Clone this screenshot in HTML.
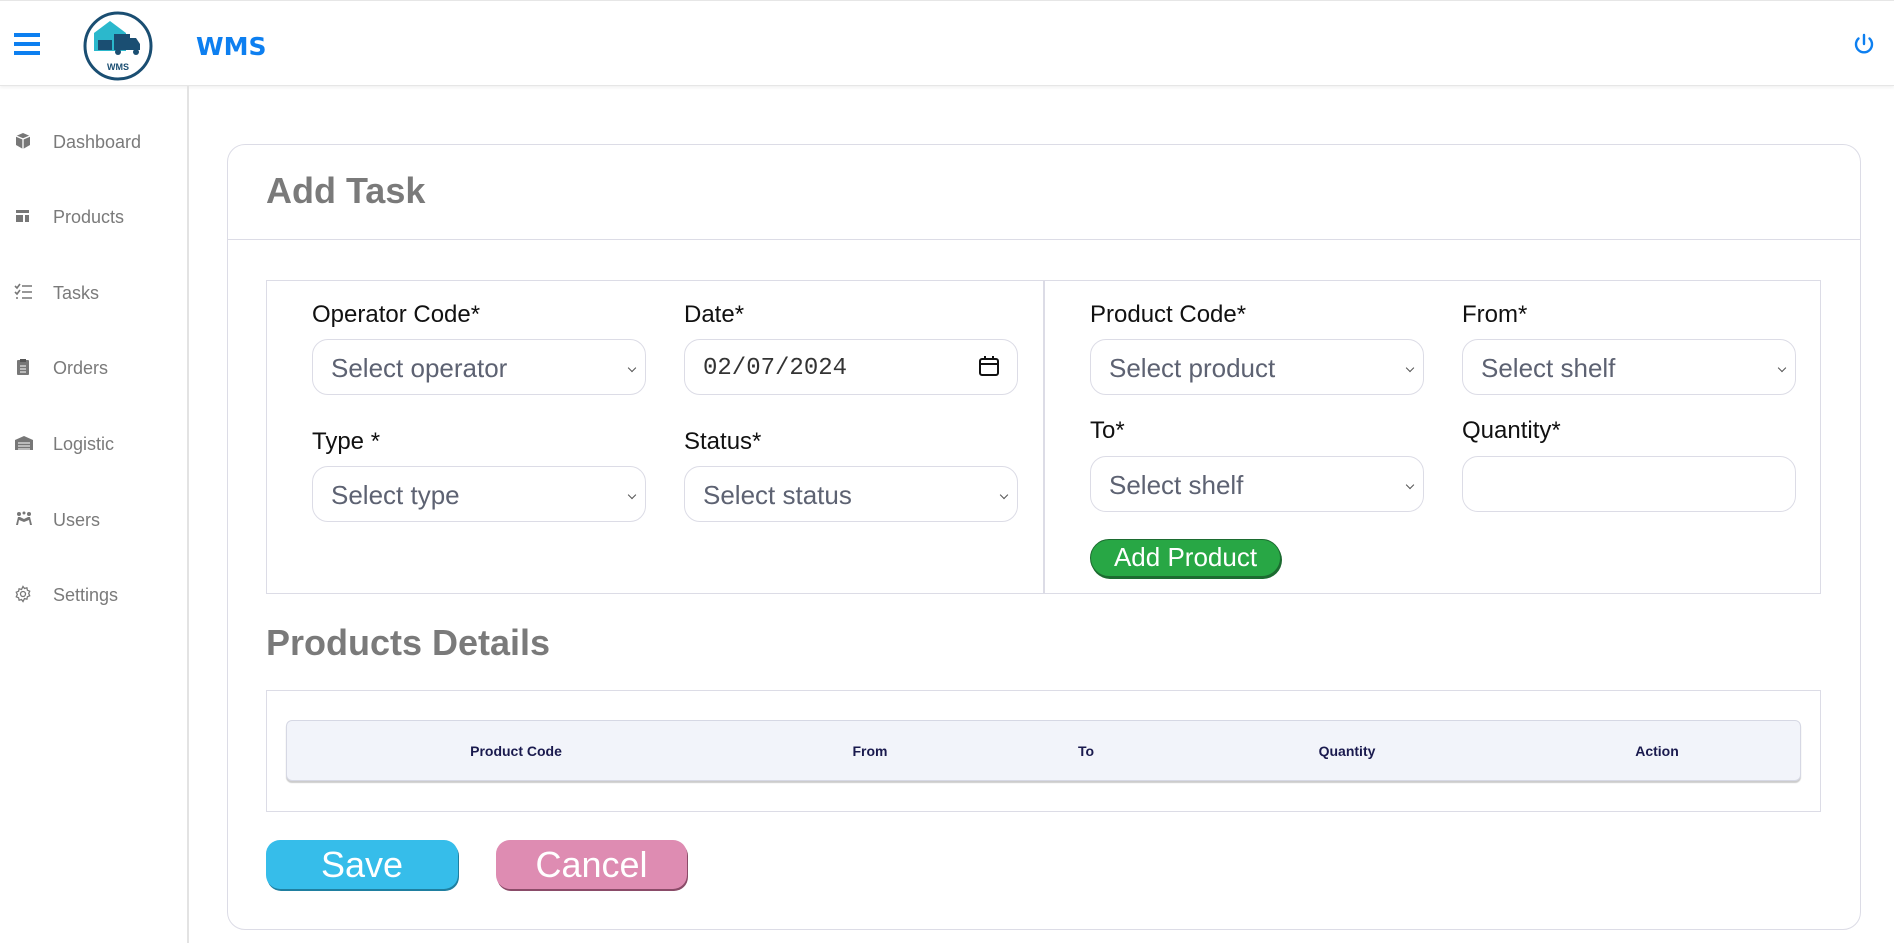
<!DOCTYPE html>
<html><head><style>
*{box-sizing:border-box;margin:0;padding:0}
body{width:1894px;height:943px;background:#fff;font-family:"Liberation Sans",sans-serif;position:relative;overflow:hidden}
.abs{position:absolute}
.top{left:0;top:0;width:1894px;height:86px;border-top:1px solid #e6e6e6;border-bottom:1px solid #e6e6e6;box-shadow:0 2px 3px rgba(0,0,0,.05)}
.side{left:0;top:86px;width:189px;height:857px;border-right:2px solid #e3e3e3}
.mi{position:absolute;left:0;height:30px;width:188px;font-family:"Liberation Sans",sans-serif;font-size:18px;color:#7a7a7a}
.mi span{position:absolute;left:53px;top:5px}
.mi svg{position:absolute;left:14px;top:5px}
.card{left:227px;top:144px;width:1634px;height:786px;border:1px solid #dcdce6;border-radius:18px}
h1{position:absolute;font-family:"Liberation Sans",sans-serif;font-weight:bold;font-size:36px;color:#7a7a7a}
.lab{position:absolute;font-family:"Liberation Sans",sans-serif;font-size:24px;color:#111}
.sel{position:absolute;width:334px;height:56px;border:1px solid #dcdce6;border-radius:16px;font-size:26px;color:#5d6272;padding:13px 0 0 18px}
.sel.dd:after{content:"";position:absolute;right:10px;top:25px;width:5px;height:5px;border-right:1.5px solid #555;border-bottom:1.5px solid #555;transform:rotate(45deg)}
.th{position:absolute;top:743px;font-size:14px;font-weight:bold;color:#1a1a4e;transform:translateX(-50%)}
.btn{position:absolute;color:#fff;text-align:center;border-radius:14px}
</style></head><body>
<div class="abs top"></div>
<div class="abs" style="left:14px;top:33px;width:26px;height:4px;background:#0d7ff0;box-shadow:0 9px 0 #0d7ff0,0 18px 0 #0d7ff0"></div>
<svg class="abs" style="left:82px;top:10px" width="72" height="72" viewBox="0 0 72 72"><circle cx="36" cy="36" r="33" fill="#fff" stroke="#1a4e72" stroke-width="3"/><path d="M12 41V23L28 11 44 23V41Z" fill="#2bb8cc"/><rect x="32" y="24" width="16" height="16" fill="#1a4e72"/><path d="M48 28h6l4 6v6H48Z" fill="#1a4e72"/><rect x="16" y="30" width="14" height="10" fill="#1a4e72"/><circle cx="36" cy="42" r="3" fill="#1a4e72"/><circle cx="54" cy="42" r="3" fill="#1a4e72"/><text x="36" y="60" font-size="9" font-weight="bold" fill="#1a4e72" text-anchor="middle" font-family="Liberation Sans">WMS</text></svg>
<div class="abs" style="left:196px;top:32px;font-size:25px;font-weight:bold;color:#0d7ff0;font-family:'DejaVu Sans',sans-serif">WMS</div>
<svg class="abs" style="left:1852px;top:32px" width="24" height="24" viewBox="0 0 24 24" fill="none" stroke="#0d7ff0" stroke-width="2.4" stroke-linecap="round"><path d="M12 3v9"/><path d="M6.5 6.5a8 8 0 1 0 11 0"/></svg>
<div class="abs side"></div>
<div class="mi" style="top:127px"><svg width="18" height="18" viewBox="0 0 18 18"><path d="M9 1l7 3v9l-7 4-7-4V4z" fill="#777"/><path d="M2 4l7 3 7-3M9 7v10" stroke="#fff" stroke-width="1.3" fill="none"/></svg><span>Dashboard</span></div>
<div class="mi" style="top:202px"><svg width="18" height="18" viewBox="0 0 18 18"><rect x="2" y="3" width="13" height="3" fill="#777"/><rect x="2" y="8" width="7" height="7" fill="#777"/><rect x="11" y="8" width="4" height="7" fill="#777"/></svg><span>Products</span></div>
<div class="mi" style="top:278px"><svg width="20" height="18" viewBox="0 0 20 18" stroke="#777" stroke-width="1.6" fill="none"><path d="M1 3l2 2 3-4M1 9l2 2 3-4M2 15h2M8 3h10M8 9h10M8 15h10"/></svg><span>Tasks</span></div>
<div class="mi" style="top:353px"><svg width="18" height="18" viewBox="0 0 18 18"><rect x="3" y="2" width="12" height="15" rx="1" fill="#777"/><rect x="6" y="1" width="6" height="3" fill="#555"/><path d="M6 8h6M6 11h6M6 14h6" stroke="#fff"/></svg><span>Orders</span></div>
<div class="mi" style="top:429px"><svg width="20" height="18" viewBox="0 0 20 18"><path d="M1 6l9-4 9 4v10H1z" fill="#777"/><path d="M4 9h12M4 12h12M4 15h12" stroke="#fff"/></svg><span>Logistic</span></div>
<div class="mi" style="top:505px"><svg width="20" height="18" viewBox="0 0 20 18" fill="#777"><circle cx="5" cy="4" r="2"/><circle cx="15" cy="4" r="2"/><circle cx="10" cy="3" r="1.5"/><path d="M2 15l2-8h2l4 2 4-2h2l2 8h-2l-1-5-5 2-5-2-1 5z"/></svg><span>Users</span></div>
<div class="mi" style="top:580px"><svg width="18" height="18" viewBox="0 0 18 18" fill="none" stroke="#777" stroke-width="1.3"><circle cx="9" cy="9" r="2.5"/><path d="M9 1.5l1.5 2 2.4-.7.5 2.4 2.3 1-1 2.3 1 2.3-2.3 1-.5 2.4-2.4-.7L9 16.5l-1.5-2-2.4.7-.5-2.4-2.3-1 1-2.3-1-2.3 2.3-1 .5-2.4 2.4.7z"/></svg><span>Settings</span></div>

<div class="abs card"></div>
<h1 style="left:266px;top:170px">Add Task</h1>
<div class="abs" style="left:228px;top:239px;width:1632px;height:1px;background:#dcdce6"></div>
<div class="abs" style="left:266px;top:280px;width:1555px;height:314px;border:1px solid #dcdce6"></div>
<div class="abs" style="left:1043px;top:280px;width:2px;height:314px;background:#dcdce6"></div>

<div class="lab" style="left:312px;top:301px">Operator Code*</div>
<div class="sel dd" style="left:312px;top:339px">Select operator</div>
<div class="lab" style="left:684px;top:301px">Date*</div>
<div class="sel" style="left:684px;top:339px;font-family:'Liberation Mono',monospace;font-size:24px;color:#333;padding-top:15px">02/07/2024</div>
<svg class="abs" style="left:978px;top:355px" width="22" height="22" viewBox="0 0 22 22" fill="none" stroke="#111" stroke-width="2"><rect x="2" y="4" width="18" height="16" rx="2"/><path d="M2 9h18M7 1v4M15 1v4"/></svg>
<div class="lab" style="left:312px;top:428px">Type *</div>
<div class="sel dd" style="left:312px;top:466px">Select type</div>
<div class="lab" style="left:684px;top:428px">Status*</div>
<div class="sel dd" style="left:684px;top:466px">Select status</div>

<div class="lab" style="left:1090px;top:301px">Product Code*</div>
<div class="sel dd" style="left:1090px;top:339px">Select product</div>
<div class="lab" style="left:1462px;top:301px">From*</div>
<div class="sel dd" style="left:1462px;top:339px">Select shelf</div>
<div class="lab" style="left:1090px;top:417px">To*</div>
<div class="sel dd" style="left:1090px;top:456px">Select shelf</div>
<div class="lab" style="left:1462px;top:417px">Quantity*</div>
<div class="sel" style="left:1462px;top:456px"></div>
<div class="btn" style="left:1090px;top:539px;width:191px;height:38px;background:#28a745;border:1px solid #1c6b30;border-radius:19px;font-size:26px;line-height:35px;box-shadow:1px 2px 0 #1c6b30">Add Product</div>

<h1 style="left:266px;top:622px">Products Details</h1>
<div class="abs" style="left:266px;top:690px;width:1555px;height:122px;border:1px solid #dcdce6"></div>
<div class="abs" style="left:286px;top:720px;width:1515px;height:61px;background:#f2f4fa;border:1px solid #d6d8e4;border-radius:6px;box-shadow:0 2px 1px #ccc"></div>
<div class="th" style="left:516px">Product Code</div>
<div class="th" style="left:870px">From</div>
<div class="th" style="left:1086px">To</div>
<div class="th" style="left:1347px">Quantity</div>
<div class="th" style="left:1657px">Action</div>

<div class="btn" style="left:266px;top:840px;width:192px;height:49px;background:#36bdea;font-size:36px;line-height:49px;box-shadow:1px 2px 0 #1f7fa0">Save</div>
<div class="btn" style="left:496px;top:840px;width:191px;height:49px;background:#de8cb2;font-size:36px;line-height:49px;box-shadow:1px 2px 0 #8a4b68">Cancel</div>
</body></html>
